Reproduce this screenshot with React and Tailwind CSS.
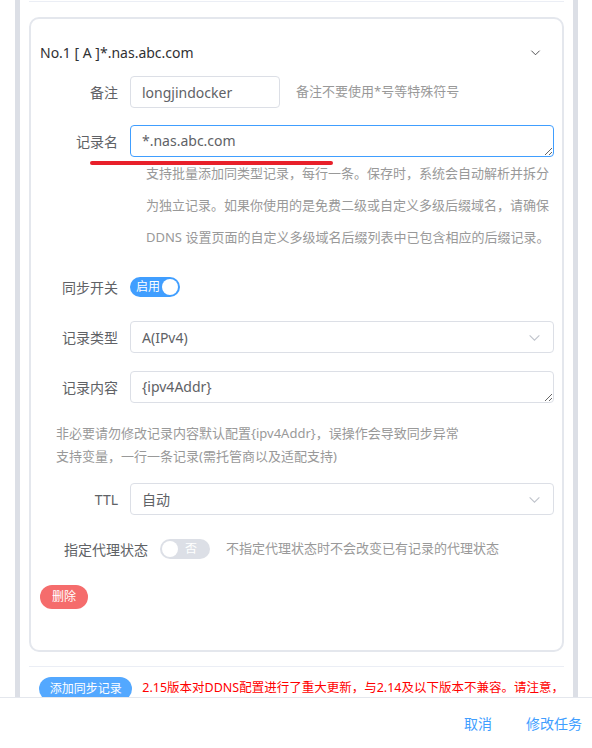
import { useState } from "react";

function Chevron({ className, w = "1" }) {
  return (
    <svg viewBox="0 0 12 12" className={className} fill="none" stroke="currentColor" strokeWidth={w}>
      <path d="M1.5 4 L6 8.5 L10.5 4" />
    </svg>
  );
}

function Row({ label, children, labelW = "w-[90px]", className = "" }) {
  return (
    <div className={"flex items-start " + className}>
      <div className={labelW + " shrink-0 h-[32px] flex items-center justify-end pr-3 text-[14px] text-[#606266]"}>{label}</div>
      <div className="flex-1 min-w-0">{children}</div>
    </div>
  );
}

function Select({ value }) {
  return (
    <div className="h-[32px] border border-[#dcdfe6] rounded-[4px] flex items-center justify-between pl-[11px] pr-[12px] text-[14px] text-[#606266]">
      <span>{value}</span>
      <Chevron className="w-[13px] h-[13px] text-[#c0c4cc]" />
    </div>
  );
}

function Switch({ on, text }) {
  return (
    <div
      className={
        "relative h-[20px] w-[50px] rounded-full flex items-center text-[12px] text-white " +
        (on ? "bg-[#409eff] justify-start pl-[6px]" : "bg-[#dcdfe6] justify-end pr-[13px]")
      }
    >
      <span className="leading-none">{text}</span>
      <span
        className={
          "absolute top-[2px] w-[16px] h-[16px] rounded-full bg-white " + (on ? "right-[2px]" : "left-[2px]")
        }
      />
    </div>
  );
}

export default function App() {
  const [name, setName] = useState("*.nas.abc.com");
  return (
    <div className="relative w-[592px] h-[748px] overflow-hidden bg-white font-['Noto_Sans','Noto_Sans_CJK_SC',sans-serif]">
      <div className="ml-[15px] w-[563px] h-[697px] border-x-[5px] border-[#dcdfe6] overflow-hidden">
        <div className="pl-[9px] pr-[9px]">
          <div className="mt-px h-px bg-[#ebeef5]" />

          {/* 卡片 */}
          <div className="mt-[15px] border-2 border-[#e4e7ed] rounded-[10px] pl-[9px] pr-[8px] pt-[13px] pb-[41px]">
            <div className="h-[40px] flex items-center justify-between pr-[13px] text-[14px] text-[#303133]">
              <span>No.1 [ A ]*.nas.abc.com</span>
              <Chevron className="w-[11px] h-[11px] text-[#303133]" w="0.9" />
            </div>

            <div className="mt-[4px]">
              <Row label="备注" className="mb-[17px]">
                <div className="flex items-center">
                  <input
                    readOnly
                    value="longjindocker"
                    className="w-[150px] h-[32px] border border-[#dcdfe6] rounded-[4px] px-[11px] text-[14px] text-[#606266] outline-none"
                  />
                  <span className="ml-[16px] text-[13px] text-[#999]">备注不要使用*号等特殊符号</span>
                </div>
              </Row>

              <Row label="记录名" className="mb-[18px]">
                <textarea
                  rows={1}
                  value={name}
                  onChange={(e) => setName(e.target.value)}
                  className="block w-full h-[32px] border border-[#409eff] rounded-[4px] px-[11px] py-[4px] text-[14px] leading-[22px] text-[#606266] outline-none resize-y"
                />
                <div className="pl-4 pr-1 text-[13px] leading-[32px] text-[#999]">
                  <div>支持批量添加同类型记录，每行一条。保存时，系统会自动解析并拆分</div>
                  <div>为独立记录。如果你使用的是免费二级或自定义多级后缀域名，请确保</div>
                  <div>DDNS 设置页面的自定义多级域名后缀列表中已包含相应的后缀记录。</div>
                </div>
              </Row>

              <Row label="同步开关" className="mb-[18px]">
                <div className="h-[32px] flex items-center">
                  <Switch on text="启用" />
                </div>
              </Row>

              <Row label="记录类型" className="mb-[18px]">
                <Select value="A(IPv4)" />
              </Row>

              <Row label="记录内容">
                <textarea
                  rows={1}
                  readOnly
                  value="{ipv4Addr}"
                  className="block w-full h-[32px] border border-[#dcdfe6] rounded-[4px] px-[11px] py-[4px] text-[14px] leading-[22px] text-[#606266] outline-none resize-y"
                />
              </Row>
              <div className="ml-[16px] mt-[19px] mb-[15px] text-[13px] leading-[23px] text-[#999]">
                <div>非必要请勿修改记录内容默认配置{"{ipv4Addr}"}，误操作会导致同步异常</div>
                <div>支持变量，一行一条记录(需托管商以及适配支持)</div>
              </div>

              <Row label="TTL" className="mb-[18px]">
                <Select value="自动" />
              </Row>

              <Row label="指定代理状态" labelW="w-[120px]" className="mb-[18px]">
                <div className="h-[32px] flex items-center">
                  <Switch on={false} text="否" />
                  <span className="ml-[16px] text-[13px] text-[#999]">不指定代理状态时不会改变已有记录的代理状态</span>
                </div>
              </Row>

              <button className="h-[24px] w-[48px] rounded-full bg-[#f56c6c] text-white text-[12px] leading-none">
                删除
              </button>
            </div>
          </div>

          <div className="mt-[14px] h-px bg-[#ebeef5]" />
          <div className="mt-[10px] flex items-start">
            <button className="ml-[10px] h-[24px] w-[96px] rounded-full bg-[#53a8ff] text-white text-[12px] leading-none whitespace-nowrap">
              添加同步记录
            </button>
            <span className="ml-[10px] mt-[1px] text-[12.5px] leading-[20px] text-[#ff0000] whitespace-nowrap">
              2.15版本对DDNS配置进行了重大更新，与2.14及以下版本不兼容。请注意，
            </span>
          </div>
        </div>
      </div>

      {/* 底部按钮 */}
      <div className="h-[51px] border-t border-[#e4e7ed] flex items-center justify-end pr-[10px] gap-[34px] text-[14px] text-[#409eff]">
        <button>取消</button>
        <button>修改任务</button>
      </div>

      {/* 标注下划线 */}
      <div className="absolute left-[90px] top-[161px] w-[243px] h-[4px] rounded-full bg-[#e8202a]" />
    </div>
  );
}
